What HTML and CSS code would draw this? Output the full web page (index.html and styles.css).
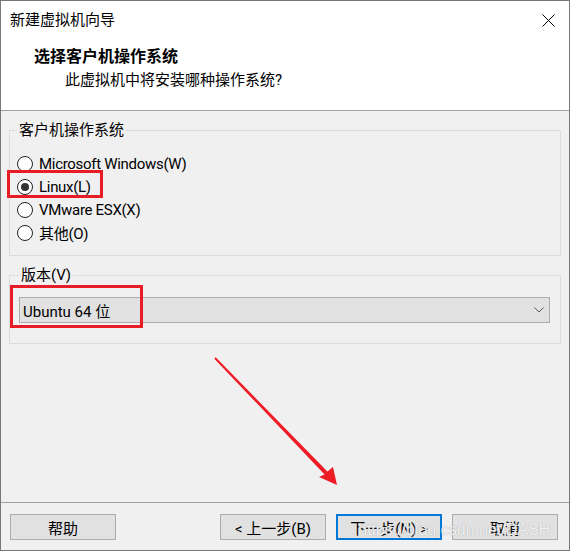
FILE: index.html
```html
<!DOCTYPE html>
<html lang="zh-CN">
  <head>
    <meta charset="UTF-8" />
    <meta name="viewport" content="width=device-width, initial-scale=1.0" />
    <title>新建虚拟机向导</title>
    <link rel="stylesheet" href="styles.css">
  </head>
  <body>
    <div class="screen">
      <div class="window">
        <div class="titlebar">
          <span class="title">新建虚拟机向导</span>
          <svg class="close" width="13" height="13" viewBox="0 0 13 13">
            <path d="M0.5 0.5 L12.5 12.5 M12.5 0.5 L0.5 12.5" stroke="#000" stroke-width="1" fill="none" />
          </svg>
        </div>
        <div class="header">
          <div class="heading">选择客户机操作系统</div>
          <div class="subheading">此虚拟机中将安装哪种操作系统?</div>
        </div>
        <div class="content">
          <fieldset class="group os-group">
            <legend>客户机操作系统</legend>
            <div class="radio"><span class="radio-mark"></span>Microsoft Windows(W)</div>
            <div class="radio checked"><span class="radio-mark"></span>Linux(L)</div>
            <div class="radio"><span class="radio-mark"></span>VMware ESX(X)</div>
            <div class="radio"><span class="radio-mark"></span>其他(O)</div>
          </fieldset>
          <fieldset class="group version-group">
            <legend>版本(V)</legend>
            <div class="combo">
              <span>Ubuntu 64 位</span>
              <svg width="10" height="6" viewBox="0 0 10 6">
                <path d="M0.5 0.5 L5 5 L9.5 0.5" stroke="#555" stroke-width="1" fill="none" />
              </svg>
            </div>
          </fieldset>
        </div>
        <div class="footer">
          <button class="btn">帮助</button>
          <button class="btn btn-back">&lt; 上一步(B)</button>
          <button class="btn btn-primary">下一步(N) &gt;</button>
          <button class="btn">取消</button>
        </div>
      </div>

      <!-- annotations drawn on top of the screenshot -->
      <div class="mark mark-linux"></div>
      <div class="mark mark-version"></div>
      <svg class="arrow" width="570" height="551" viewBox="0 0 570 551">
        <polygon points="214.3,358.7 324.6,474.4 319,477 337,485 333,467 327.4,471.6 215.7,357.3" fill="#ee1c25" />
      </svg>
      <div class="watermark">https://blog.csdn.net/DASH</div>
    </div>
  </body>
</html>
```

FILE: styles.css
```css
body {
  margin: 0;
  font-family: Roboto, "Noto Sans CJK SC", sans-serif;
  font-size: 15px;
  color: #000;
}
.screen {
  position: relative;
  width: 570px;
  height: 551px;
}
.window {
  width: 570px;
  height: 551px;
  box-sizing: border-box;
  border: 1px solid #777;
  background: #f0f0f0;
  display: flex;
  flex-direction: column;
}
.titlebar {
  height: 38px;
  background: #fff;
  display: flex;
  align-items: center;
  justify-content: space-between;
  padding: 0 14px 0 9px;
}
.title {
  line-height: 20px;
}
.header {
  background: #fff;
  padding: 8px 0 20px;
  border-bottom: 1px solid #a0a0a0;
}
.heading {
  font-size: 16px;
  font-weight: bold;
  line-height: 20px;
  padding-left: 33px;
}
.subheading {
  line-height: 20px;
  margin-top: 3px;
  padding-left: 64px;
}
.content {
  flex: 1;
  padding: 9px 8px 0;
}
.group {
  margin: 0;
  border: 1px solid #dcdcdc;
  padding: 12px 10px 11px 7px;
}
.group legend {
  line-height: 20px;
  padding: 0 2px;
}
.radio {
  display: flex;
  align-items: center;
  height: 23px;
  letter-spacing: -0.3px;
}
.radio-mark {
  width: 16px;
  height: 16px;
  box-sizing: border-box;
  border: 1px solid #222;
  border-radius: 50%;
  background: #fff;
  margin-right: 6px;
  display: flex;
  align-items: center;
  justify-content: center;
}
.radio.checked .radio-mark::after {
  content: "";
  width: 8px;
  height: 8px;
  border-radius: 50%;
  background: #333;
}
.version-group {
  margin-top: 9px;
  padding: 12px 10px 20px 9px;
}
.combo {
  height: 26px;
  box-sizing: border-box;
  border: 1px solid #adadad;
  background: #e1e1e1;
  display: flex;
  align-items: center;
  justify-content: space-between;
  padding: 0 5px 0 3px;
}
.footer {
  border-top: 1px solid #a0a0a0;
  padding: 11px 11px 10px 9px;
  display: flex;
  gap: 10px;
}
.btn {
  width: 106px;
  height: 26px;
  box-sizing: border-box;
  border: 1px solid #adadad;
  background: #e1e1e1;
  font-family: inherit;
  font-size: 15px;
  color: #000;
  padding: 0;
}
.btn-back {
  margin-left: auto;
}
.btn-primary {
  border: 2px solid #0078d7;
}
.mark {
  position: absolute;
  border: 3px solid #e81c24;
  box-sizing: border-box;
}
.mark-linux {
  left: 7px;
  top: 170px;
  width: 96px;
  height: 28px;
}
.mark-version {
  left: 10px;
  top: 285px;
  width: 133px;
  height: 43px;
}
.arrow {
  position: absolute;
  left: 0;
  top: 0;
  pointer-events: none;
}
.watermark {
  position: absolute;
  left: 358px;
  top: 521px;
  font-family: "Liberation Sans", Arial, sans-serif;
  font-size: 16px;
  color: rgba(255, 255, 255, 0.85);
  text-shadow: 0 0 1px #999;
  pointer-events: none;
}
```
